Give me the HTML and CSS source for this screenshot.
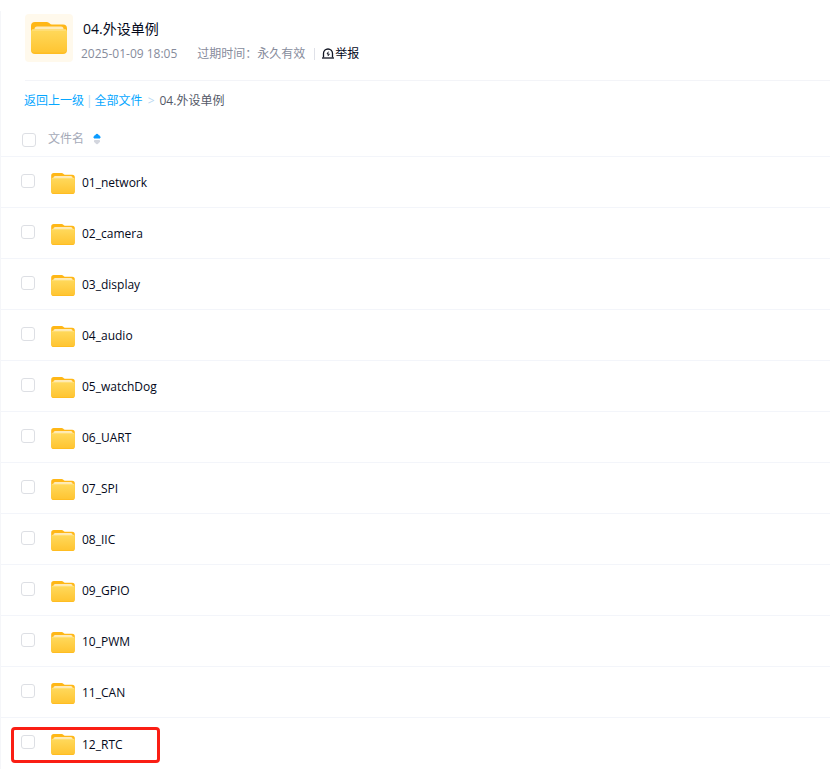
FILE: index.html
```
<!DOCTYPE html>
<html lang="zh-CN">
<head>
  <meta charset="UTF-8" />
  <meta name="viewport" content="width=device-width, initial-scale=1.0" />
  <title>04.外设单例</title>
  <link rel="stylesheet" href="styles.css">
</head>
<body>
  <!-- Shared folder icon -->
  <svg class="sprite" width="0" height="0" aria-hidden="true">
    <defs>
      <linearGradient id="folderFront" x1="0" y1="0" x2="0" y2="1">
        <stop offset="0" stop-color="#ffd95c" />
        <stop offset="1" stop-color="#ffc532" />
      </linearGradient>
    </defs>
    <symbol id="folder" viewBox="0 0 36 32">
      <path d="M0 4a4 4 0 0 1 4-4h12c2 0 3 2.600 5 2.600h11a4 4 0 0 1 4 4V16H0z" fill="#ffb716" />
      <path d="M3.500 8.500V7a2.500 2.500 0 0 1 2.500-2.500h24A2.500 2.500 0 0 1 32.500 7v1.500z" fill="#ffebb8" />
      <path d="M0 9.500a2 2 0 0 1 2-2h32a2 2 0 0 1 2 2V28a4 4 0 0 1-4 4H4a4 4 0 0 1-4-4z" fill="#ffbd22" />
      <path d="M0 9.500a2 2 0 0 1 2-2h32a2 2 0 0 1 2 2V26.500a4 4 0 0 1-4 4H4a4 4 0 0 1-4-4z" fill="url(#folderFront)" />
      <path d="M1 8h34" stroke="#ffe38f" />
    </symbol>
  </svg>

  <main class="container">
    <!-- Share info -->
    <header class="share-header">
      <div class="share-icon">
        <svg width="36" height="32"><use href="#folder" /></svg>
      </div>
      <div class="share-info">
        <h1>04.外设单例</h1>
        <div class="share-meta">
          <span class="share-date">2025-01-09 18:05</span>
          <span class="share-expire">过期时间：永久有效</span>
          <a href="#report" class="report">
            <svg width="12" height="12" viewBox="0 0 12 12" fill="none" stroke="#111522" aria-hidden="true">
              <path d="M1.500 9.500V5.500a4.500 4.500 0 0 1 9 0v4" stroke-width="1.300" />
              <path d="M0 10h12" stroke-width="1.300" />
              <path d="M6.500 3.700L5 6h2.300L5.900 8" />
            </svg>
            <span>举报</span>
          </a>
        </div>
      </div>
    </header>

    <!-- Breadcrumb -->
    <nav class="breadcrumb">
      <a href="#back">返回上一级</a>
      <span class="divider">|</span>
      <a href="#all">全部文件</a>
      <span class="arrow">&gt;</span>
      <span>04.外设单例</span>
    </nav>

    <!-- File list -->
    <table class="file-table">
      <thead>
        <tr>
          <th class="check"><input type="checkbox" aria-label="全选"></th>
          <th>
            <button type="button" class="sort">
              文件名
              <svg width="8" height="12" viewBox="0 0 8 12" aria-hidden="true">
                <path d="M4 1L7 3.500V5H1V3.500z" fill="#0a9bff" stroke="#0a9bff" stroke-linejoin="round" />
                <path d="M1.500 7.500h5V9L4 11L1.500 9z" fill="#d3d6de" stroke="#d3d6de" stroke-linejoin="round" />
              </svg>
            </button>
          </th>
        </tr>
      </thead>
      <tbody>
        <tr>
          <td class="check"><input type="checkbox" id="f01"></td>
          <td><label class="file" for="f01"><svg width="24" height="21"><use href="#folder" /></svg>01_network</label></td>
        </tr>
        <tr>
          <td class="check"><input type="checkbox" id="f02"></td>
          <td><label class="file" for="f02"><svg width="24" height="21"><use href="#folder" /></svg>02_camera</label></td>
        </tr>
        <tr>
          <td class="check"><input type="checkbox" id="f03"></td>
          <td><label class="file" for="f03"><svg width="24" height="21"><use href="#folder" /></svg>03_display</label></td>
        </tr>
        <tr>
          <td class="check"><input type="checkbox" id="f04"></td>
          <td><label class="file" for="f04"><svg width="24" height="21"><use href="#folder" /></svg>04_audio</label></td>
        </tr>
        <tr>
          <td class="check"><input type="checkbox" id="f05"></td>
          <td><label class="file" for="f05"><svg width="24" height="21"><use href="#folder" /></svg>05_watchDog</label></td>
        </tr>
        <tr>
          <td class="check"><input type="checkbox" id="f06"></td>
          <td><label class="file" for="f06"><svg width="24" height="21"><use href="#folder" /></svg>06_UART</label></td>
        </tr>
        <tr>
          <td class="check"><input type="checkbox" id="f07"></td>
          <td><label class="file" for="f07"><svg width="24" height="21"><use href="#folder" /></svg>07_SPI</label></td>
        </tr>
        <tr>
          <td class="check"><input type="checkbox" id="f08"></td>
          <td><label class="file" for="f08"><svg width="24" height="21"><use href="#folder" /></svg>08_IIC</label></td>
        </tr>
        <tr>
          <td class="check"><input type="checkbox" id="f09"></td>
          <td><label class="file" for="f09"><svg width="24" height="21"><use href="#folder" /></svg>09_GPIO</label></td>
        </tr>
        <tr>
          <td class="check"><input type="checkbox" id="f10"></td>
          <td><label class="file" for="f10"><svg width="24" height="21"><use href="#folder" /></svg>10_PWM</label></td>
        </tr>
        <tr>
          <td class="check"><input type="checkbox" id="f11"></td>
          <td><label class="file" for="f11"><svg width="24" height="21"><use href="#folder" /></svg>11_CAN</label></td>
        </tr>
        <tr class="marked">
          <td class="check"><input type="checkbox" id="f12"></td>
          <td><label class="file" for="f12"><svg width="24" height="21"><use href="#folder" /></svg>12_RTC</label></td>
        </tr>
      </tbody>
    </table>
  </main>
</body>
</html>
```

FILE: styles.css
```
*,
*::after {
  box-sizing: border-box;
}
body {
  margin: 0;
  padding-top: 11px;
  background: #fff;
  color: #03081a;
  font-family: "Open Sans", "Noto Sans CJK SC", sans-serif;
  font-size: 12px;
  line-height: 20px;
}
svg {
  display: block;
  flex: none;
}
a {
  color: #06a7ff;
  text-decoration: none;
}
.sprite {
  position: absolute;
}
.container {
  border-left: 1px solid #f5f6f9;
}

/* Share info */
.share-header {
  display: flex;
  gap: 8px;
  margin-left: 24px;
  padding-top: 3px;
  height: 70px;
  border-bottom: 1px solid #f3f4f8;
}
.share-icon {
  display: flex;
  align-items: center;
  justify-content: center;
  width: 48px;
  height: 48px;
  border-radius: 4px;
  background: #fff9ec;
}
.share-info {
  padding-top: 5px;
}
h1 {
  margin: 0 0 5px 2px;
  font-size: 14px;
  font-weight: normal;
  line-height: 20px;
}
.share-meta {
  display: flex;
  align-items: center;
  color: #878c9c;
}
.share-date {
  margin-right: 20px;
}
.share-expire {
  margin-right: 9px;
}
.report {
  display: flex;
  align-items: center;
  gap: 1px;
  padding-left: 8px;
  color: #03081a;
  background: linear-gradient(#dfe1e8, #dfe1e8) left center / 1px 12px no-repeat;
}

/* Breadcrumb */
.breadcrumb {
  display: flex;
  align-items: center;
  padding: 10px 23px 9px;
  color: #545968;
}
.breadcrumb .divider,
.breadcrumb .arrow {
  color: #b9d9f2;
}
.breadcrumb .divider {
  padding: 0 2px;
}
.breadcrumb .arrow {
  padding: 0 5px;
}

/* File list */
.file-table {
  width: 100%;
  border-collapse: separate;
  border-spacing: 0;
}
th, td {
  padding: 2px 0 0;
  text-align: left;
  font-weight: normal;
  border-bottom: 1px solid #f3f5fa;
}
th {
  height: 37px;
}
td {
  height: 51px;
}
.check {
  width: 50px;
  padding-left: 20px;
}
td.check {
  padding-top: 0;
  padding-bottom: 3px;
}
th.check {
  padding-top: 3px;
  padding-left: 21px;
}
input[type="checkbox"] {
  appearance: none;
  display: block;
  width: 14px;
  height: 14px;
  margin: 0;
  border: 1px solid #dddfe4;
  border-radius: 3px;
  background: #fff;
}
input[type="checkbox"]:checked {
  border-color: #06a7ff;
  background: #06a7ff;
}
.sort {
  display: flex;
  align-items: center;
  gap: 9px;
  margin-left: -3px;
  padding: 0;
  border: none;
  background: none;
  color: #a5aab8;
  font: inherit;
  cursor: pointer;
}
.file {
  display: flex;
  align-items: center;
  gap: 7px;
}
.marked td {
  border-bottom: none;
}

/* Red frame drawn over the marked row */
.marked {
  position: relative;
}
.marked::after {
  content: "";
  position: absolute;
  top: 9px;
  left: 10px;
  width: 149px;
  height: 36px;
  border: 3px solid #fa1e14;
  border-radius: 4px;
  pointer-events: none;
}
```
